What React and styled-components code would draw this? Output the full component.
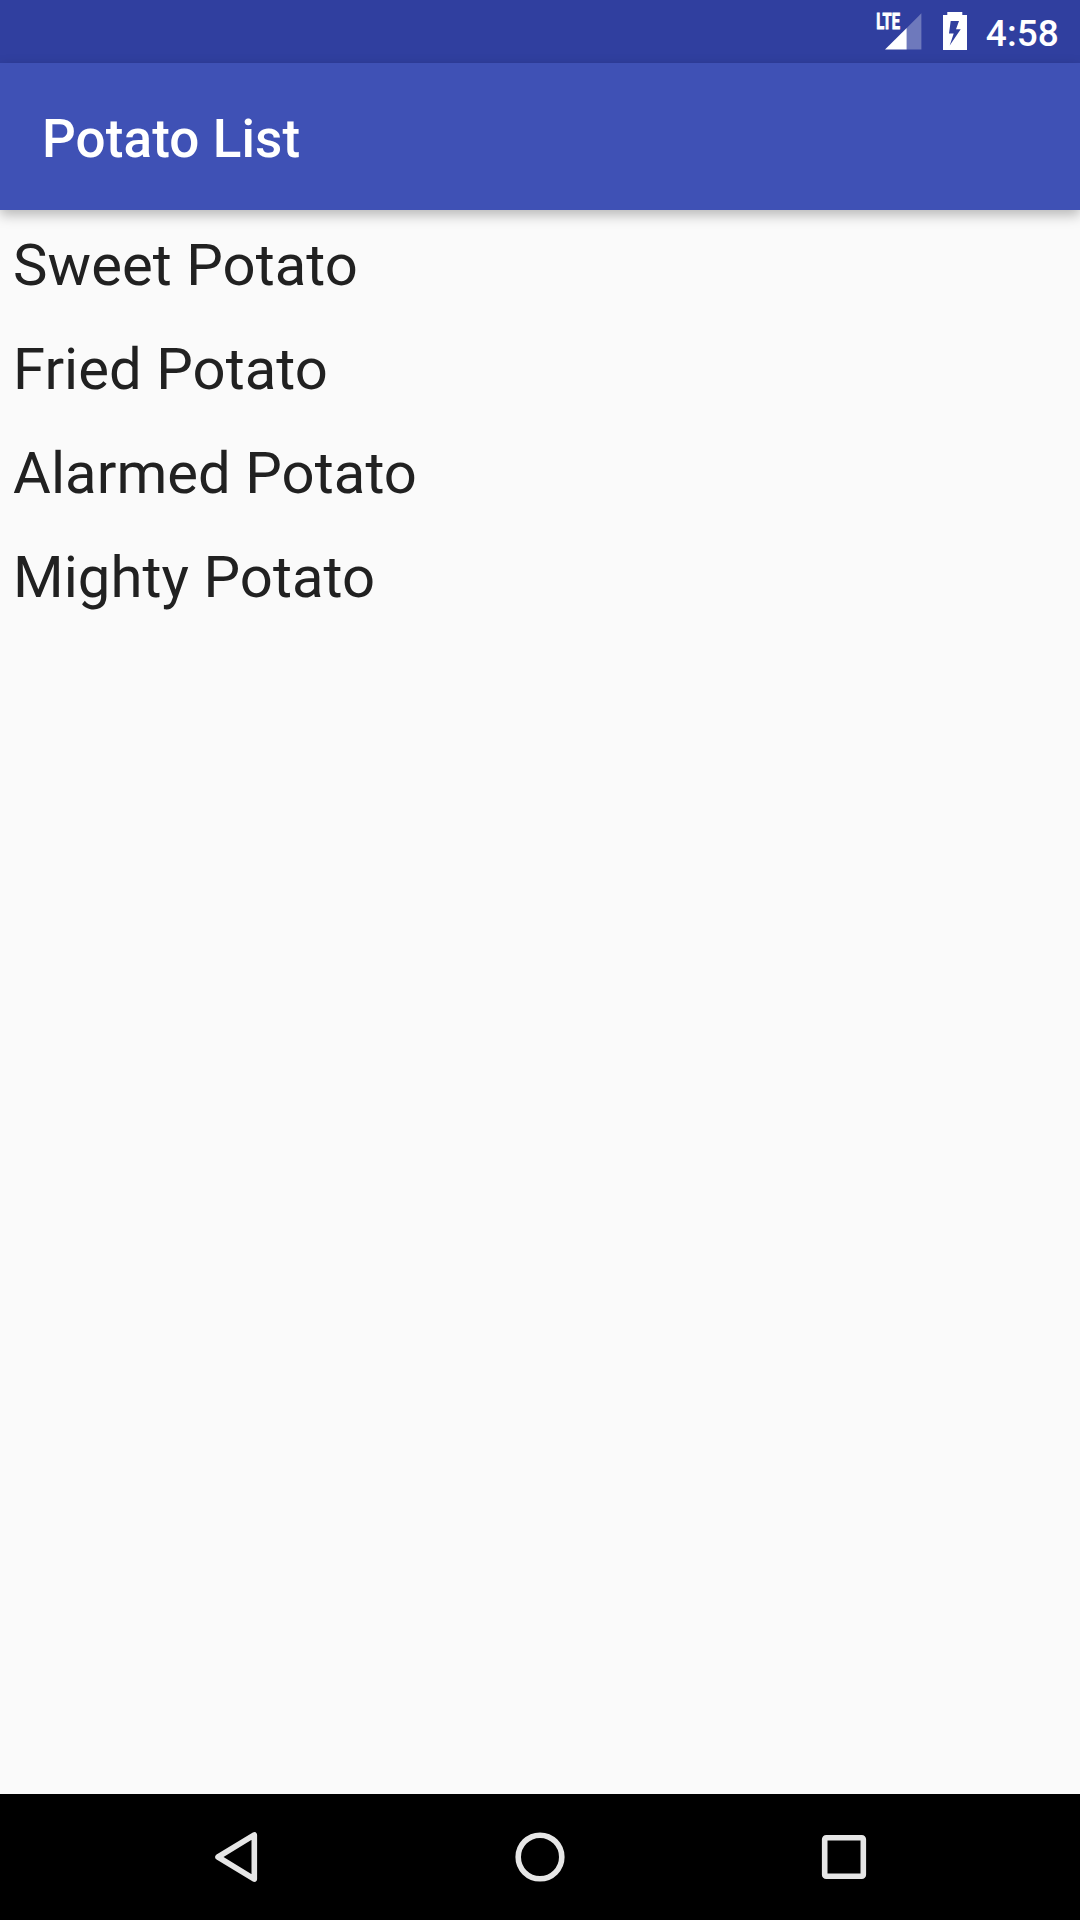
import React from 'react';
import styled, { createGlobalStyle } from 'styled-components';

const potatoes = ['Sweet Potato', 'Fried Potato', 'Alarmed Potato', 'Mighty Potato'];

const SignalIcon = () => (
    <svg width="50" height="50" viewBox="0 -10 50 50">
        <text x="1.3" y="19.2" fontFamily="Roboto, sans-serif" fontSize="22" fontWeight="700" fill="#fff" stroke="#fff" strokeWidth="0.9" textLength="23.6" lengthAdjust="spacingAndGlyphs">LTE</text>
        <path d="M10 39.6 L31.7 17.9 V39.6 Z" fill="#fff" />
        <path d="M31.7 17.9 L46.4 3.2 V39.6 H31.7 Z" fill="#fff" fillOpacity="0.3" />
    </svg>
);

const BatteryIcon = () => (
    <svg width="24" height="38" viewBox="0 0 24 38">
        <path fillRule="evenodd" fill="#fff" d="M4.3 0 H19.3 V3 H24 V38 H0 V3 H4.3 Z M7.7 9 L6 21.5 H10.7 L6.7 33.5 L17.7 17.3 H13 L16 9 Z" />
    </svg>
);

const App = () => {
    return (
        <>
            <GlobalStyle />
            <Screen>
                <StatusBar>
                    <SignalIcon />
                    <BatteryIcon />
                    <Clock>4:58</Clock>
                </StatusBar>
                <AppBar>
                    <Title>Potato List</Title>
                </AppBar>
                <List>
                    {potatoes.map((name) => (
                        <ListItem key={name}>{name}</ListItem>
                    ))}
                </List>
                <NavBar>
                    <NavButton aria-label="Back">
                        <svg width="60" height="60" viewBox="0 0 60 60">
                            <path d="M48.3 7.9 V52.1 L12 30 Z" />
                        </svg>
                    </NavButton>
                    <NavButton aria-label="Home">
                        <svg width="60" height="60" viewBox="0 0 60 60">
                            <circle cx="30" cy="30" r="21.8" />
                        </svg>
                    </NavButton>
                    <NavButton aria-label="Recents">
                        <svg width="60" height="60" viewBox="0 0 60 60">
                            <rect x="10.7" y="10.7" width="38.6" height="38.6" rx="1.5" />
                        </svg>
                    </NavButton>
                </NavBar>
            </Screen>
        </>
    )
};

export default App;

const GlobalStyle = createGlobalStyle`
    * {
        box-sizing: border-box;
        margin: 0;
        padding: 0;
    }

    body {
        font-family: Roboto, sans-serif;
        background: #fafafa;
    }
`;

const Screen = styled.div`
    display: flex;
    flex-direction: column;
    width: 1080px;
    height: 1920px;
    overflow: hidden;
    background: #fafafa;
`;

const StatusBar = styled.div`
    display: flex;
    justify-content: flex-end;
    align-items: flex-start;
    height: 63px;
    padding-right: 21px;
    background: #303f9f;

    svg {
        flex: none;
    }

    svg + svg {
        margin: 12px 0 0 18px;
    }
`;

const Clock = styled.span`
    margin: 10px 0 0 19px;
    font-size: 37px;
    font-weight: 500;
    line-height: 47px;
    letter-spacing: 0.1px;
    color: #fff;
`;

const AppBar = styled.header`
    display: flex;
    align-items: center;
    height: 147px;
    padding: 4px 42px 0;
    background: #3f51b5;
    box-shadow: 0 5px 12px rgba(0, 0, 0, 0.27);
`;

const Title = styled.h1`
    font-size: 53px;
    font-weight: 500;
    line-height: 62px;
    letter-spacing: 0.1px;
    color: #fff;
`;

const List = styled.ul`
    flex: 1;
    list-style: none;
`;

const ListItem = styled.li`
    height: 104px;
    padding: 13px;
    font-size: 58px;
    line-height: 84px;
    letter-spacing: 0.06px;
    color: #212121;
`;

const NavBar = styled.nav`
    display: flex;
    justify-content: center;
    gap: 14px;
    height: 126px;
    background: #000;
`;

const NavButton = styled.button`
    display: flex;
    justify-content: center;
    align-items: center;
    width: 290px;
    border: none;
    background: none;

    svg {
        fill: none;
        stroke: #e6e6e6;
        stroke-width: 5.6;
        stroke-linejoin: round;
    }
`;
